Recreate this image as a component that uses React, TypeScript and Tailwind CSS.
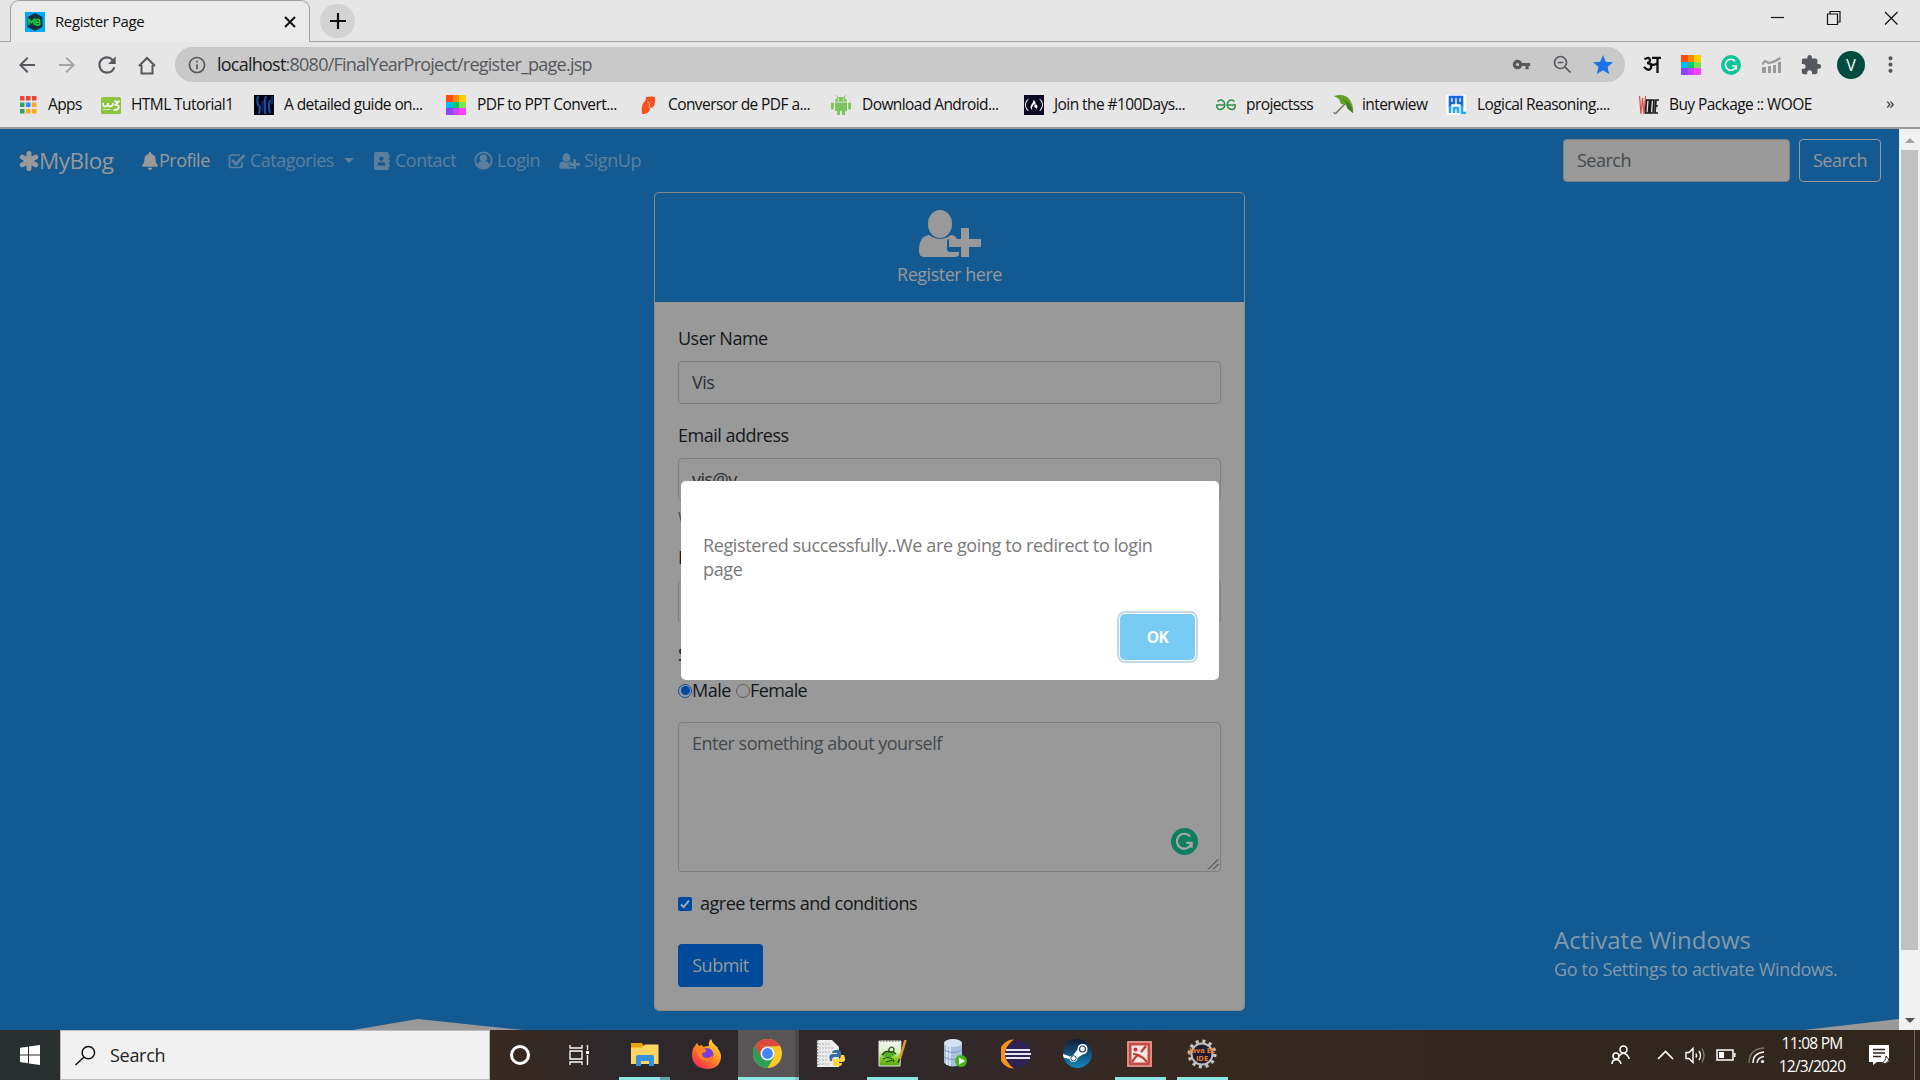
import React from "react";
import { FaBell, FaUserPlus, FaAddressBook, FaFreeCodeCamp } from "react-icons/fa";
import { MdVpnKey, MdExtension, MdStar, MdMoreVert, MdArrowBack, MdArrowForward, MdRefresh, MdInfoOutline } from "react-icons/md";

function MbIcon() {
  return (
    <svg width="20" height="20" viewBox="0 0 20 20">
      <rect width="20" height="20" fill="#03a9f4" />
      <path d="M10 1 17.5 5v10L10 19 2.5 15V5z" fill="#123044" />
      <path d="M4 13V7.500l2.500 3 2.500-3V13M11 7.500v5.500h3.200q1.600-1.500 0-2.800 1.200-1.500-.2-2.700zM11 10.200h3" fill="none" stroke="#10d63a" strokeWidth="1.500" />
    </svg>
  );
}

function ColorGrid({ size = 20 }: { size?: number }) {
  const c = ["#ff4b10", "#ff8c00", "#ffd000", "#00b8ff", "#00cc66", "#7fe050", "#8a45ff", "#cc40ff", "#ff40ff"];
  return (
    <svg width={size} height={size} viewBox="0 0 3 3" shapeRendering="crispEdges">
      {c.map((f, i) => <rect key={f} x={i % 3} y={Math.floor(i / 3)} width="1" height="1" fill={f} />)}
    </svg>
  );
}

function Grammarly({ size, bg, fg }: { size: number; bg: string; fg: string }) {
  return (
    <svg width={size} height={size} viewBox="0 0 24 24">
      <circle cx="12" cy="12" r="12" fill={bg} />
      <path d="M17 7.600A6.600 6.600 0 1 0 18.300 13.200H13.500M18.300 13v4.500" fill="none" stroke={fg} strokeWidth="1.900" />
    </svg>
  );
}

const appColors = ["#ea4335", "#ea4335", "#ea4335", "#34a060", "#2f8af5", "#fbaa19", "#34a060", "#fbaa19", "#fbaa19"];

const bookmarks: { w: string; label: string; icon: React.ReactNode; gap: string }[] = [
  { w: "w-[81px]", gap: "w-7", label: "Apps", icon: <svg width="17" height="18" viewBox="0 0 17 18">{appColors.map((f, i) => <rect key={i} x={(i % 3) * 6} y={Math.floor(i / 3) * 6.500} width="4.500" height="4.500" fill={f} />)}</svg> },
  { w: "w-[153px]", gap: "w-[30px]", label: "HTML Tutorial1", icon: <svg width="20" height="17" viewBox="0 0 20 17"><rect width="20" height="17" rx="1.500" fill="#8bc53f" /><path d="M2 6q0 4 2.500 3.500T7 6q0 4 2.500 3.500T12 6M13 4.500h4.500l-3 3.500q4 0 3 3-1.500 3-5 1.500" fill="none" stroke="#fff" strokeWidth="1.700" /><path d="M2 12.500h8" stroke="#d5ebb8" strokeWidth="1" /></svg> },
  { w: "w-[192px]", gap: "w-[30px]", label: "A detailed guide on...", icon: <svg width="20" height="20" viewBox="0 0 20 20"><rect width="20" height="20" fill="#02030a" /><path d="M4 1q-2 9 2 11L5 19M12 1q-2 5-1 9v9M16 5q-2 6 0 13" stroke="#164ca8" strokeWidth="2.200" fill="none" /><path d="M8.500 6v10M18 1v8" stroke="#0b2863" strokeWidth="2" /></svg> },
  { w: "w-[192px]", gap: "w-[31px]", label: "PDF to PPT Convert...", icon: <ColorGrid /> },
  { w: "w-[193px]", gap: "w-[30px]", label: "Conversor de PDF a...", icon: <svg width="20" height="20" viewBox="0 0 20 20"><path d="M8 2q6-1 9 0 1 10-4 11l-1 0q0 5-6 6H4Q3 10 6 7q2-1 2-5z" fill="#f4511e" /><path d="M9.500 7q3 0 1.500 6" stroke="#fbc0a8" fill="none" strokeWidth="1" /></svg> },
  { w: "w-[193px]", gap: "w-[31px]", label: "Download Android...", icon: <svg width="20" height="20" viewBox="0 0 20 20" fill="#7cc45c"><path d="M4 6.500Q4.500 2 10 2t6 4.500zM4 7.500h12V16H4z" /><path d="M0 8q1.400-1 2.800 0v6q-1.400 1-2.800 0zM17.200 8q1.400-1 2.800 0v6q-1.400 1-2.800 0zM6 15h3v5H6zM11 15h3v5h-3z" /><path d="m5.500.3 1.500 2.500M14.500.3 13 2.800" stroke="#7cc45c" /><circle cx="7.500" cy="4.500" r=".7" fill="#fff" /><circle cx="12.500" cy="4.500" r=".7" fill="#fff" /></svg> },
  { w: "w-[192px]", gap: "w-[30px]", label: "Join the #100Days...", icon: <span className="flex h-5 w-5 items-center justify-center bg-[#0a0a23]"><FaFreeCodeCamp size={18} color="#fff" /></span> },
  { w: "w-[117px]", gap: "w-[30px]", label: "projectsss", icon: <svg width="20" height="12" viewBox="0 0 20 12" fill="none" stroke="#2f8d46" strokeWidth="1.500"><path d="M1.500 2.500q2-2.300 5-1.200 3 1.800 2 6.200-1.500 3.500-5.500 2.800Q.500 9.500 .800 6h7.700M18.500 2.500q-2-2.300-5-1.200-3 1.800-2 6.200 1.500 3.500 5.500 2.800 2.500-.8 2.200-4.300h-7.700" /></svg> },
  { w: "w-[113px]", gap: "w-[29px]", label: "interwiew", icon: <svg width="21" height="20" viewBox="0 0 21 20"><path d="M1 1Q12-2 17 5q4 6 3 13l-5-4-2-4-5-1-2-5z" fill="#679f2b" /><path d="M8 3q6 3 6 10l6 5Q20 8 8 3z" fill="#457d22" /><path d="M12 9 4 17q-2 3-3 0" stroke="#7b7469" strokeWidth="1.500" fill="none" /></svg> },
  { w: "w-[193px]", gap: "w-[31px]", label: "Logical Reasoning....", icon: <svg width="20" height="20" viewBox="0 0 20 20" fill="none" strokeWidth="2.600"><rect width="20" height="20" fill="#fff" /><path d="M4 12V2h12v10M4 8h4V3M16 8h-4V3" stroke="#1668dc" /><path d="M4 11v7M8 18v-5h4v5M16 10v8h4" stroke="#2aa4f4" /></svg> },
  { w: "w-[200px]", gap: "w-[30px]", label: "Buy Package :: WOOE", icon: <svg width="20" height="20" viewBox="0 0 20 20" fill="none"><path d="m.500 1 1.500 18L3.500 3l1.500 16L6.500 1" stroke="#e34a4a" strokeWidth="1.200" /><path d="M7.500 5 6.500 18h3l1-13zM12 5l-1 13h3l1-13zM20 5h-3l-1 13h3M17 11h2" stroke="#1c1c1c" strokeWidth="1.700" /></svg> },
];

function Browser() {
  return (
    <header className="h-[129px] border-b-2 border-[#999] bg-[#e6e6e6] text-[#111]">
      <div className="flex h-[42px] border-b border-[#a0a0a0]">
        <div className="-mb-px ml-[10px] flex h-[42px] w-[300px] items-center rounded-t-[9px] border border-b-0 border-[#a0a0a0] bg-[#ebebeb] pl-[14px] pr-[13px]">
          <MbIcon />
          <span className="ml-[10px] flex-1 pb-px text-[15px] tracking-[-0.4px]">Register Page</span>
          <svg width="12" height="12" viewBox="0 0 12 12"><path d="m1 1 10 10M11 1 1 11" stroke="#111" strokeWidth="2" /></svg>
        </div>
        <div className="ml-[10px] mt-1 flex h-[34px] w-[35px] items-center justify-center rounded-full bg-[#d3d3d3]">
          <svg width="16" height="16" viewBox="0 0 16 16"><path d="M8 0v16M0 8h16" stroke="#111" strokeWidth="2.200" /></svg>
        </div>
        <div className="ml-auto mr-[22px] flex h-9 items-center">
          <svg width="127" height="16" viewBox="0 0 127 16" fill="none" stroke="#111" strokeWidth="1.200"><path d="M0 7.500h13" /><path d="M56.500 4h10v10.500h-10zM59 4V1.500h10V12h-2.500" /><path d="m114 2 12.500 12.500M126.500 2 114 14.500" /></svg>
        </div>
      </div>
      <div className="flex h-[45px] items-center pl-[15px] text-[#55585c]">
        <MdArrowBack size={24} />
        <MdArrowForward size={24} className="ml-[16px] text-[#a5a5a5]" />
        <MdRefresh size={26} className="ml-[15px]" />
        <svg className="ml-[17px]" width="20" height="20" viewBox="0 0 20 20" fill="none" stroke="currentColor" strokeWidth="2"><path d="M2 11 10 3l8 8M4.500 10v8.500h11V10" /></svg>
        <div className="ml-[18px] flex h-[35px] w-[1450px] items-center rounded-full bg-[#c9c9c9] pl-[12px] pr-[10px]">
          <MdInfoOutline size={20} />
          <span className="ml-[10px] whitespace-nowrap text-[18px] tracking-[-0.76px]"><span className="text-[#1c1c1c]">localhost</span>:8080/FinalYearProject/register_page.jsp</span>
          <MdVpnKey size={19} className="ml-auto" />
          <svg className="ml-[22px]" width="19" height="19" viewBox="0 0 19 19" fill="none" stroke="currentColor" strokeWidth="1.700"><circle cx="7.500" cy="7.500" r="6" /><path d="m12 12 5.500 5.500M4.700 7.500h5.600" /></svg>
          <MdStar size={24} className="ml-[19px] text-[#1a73e8]" />
        </div>
        <svg className="ml-[18px]" width="18" height="18" viewBox="0 0 18 18" fill="none" stroke="#111" strokeWidth="2.300"><path d="M9 1.800h9M14.500 1.500V17M1.500 3.300q5-3 5.500.7 0 3-3 3 5 0 4 5-2 4-7-1M7.500 8q4 2 7-1" /></svg>
        <span className="ml-[20px]"><ColorGrid size={20} /></span>
        <span className="ml-[20px]"><Grammarly size={20} bg="#15c39a" fg="#f2f2f2" /></span>
        <svg className="ml-[21px]" width="19" height="16" viewBox="0 0 19 16"><path d="M0 10h4v6H0zM6 9h3v7H6zM11 8h3v8h-3zM16 5h3v11h-3z" fill="#999" /><path d="M0 7.500 3 4l4 2Q13 5 18.500 1" stroke="#999" strokeWidth="2.200" fill="none" /></svg>
        <MdExtension size={22} className="ml-[19px]" />
        <span className="ml-[15px] flex h-7 w-7 items-center justify-center rounded-full bg-[#004d40] text-[16px] text-white">V</span>
        <MdMoreVert size={25} className="ml-[13px]" />
      </div>
      <div className="flex h-[36px] items-center pl-5 text-[15.500px] tracking-[-0.58px]">
        {bookmarks.map((b) => (
          <div key={b.label} className={"flex h-6 items-center whitespace-nowrap " + b.w}>
            <span className={"flex shrink-0 " + b.gap}>{b.icon}</span>
            <span className="pb-px">{b.label}</span>
          </div>
        ))}
        <span className="ml-[47px] pb-1 text-[17px] text-[#333]">»</span>
      </div>
    </header>
  );
}

function Navbar() {
  return (
    <nav className="flex h-[63px] items-center pl-[19px] text-[18px] text-[#5b7f9c]">
      <span className="flex w-[122px] items-center text-[22.5px] tracking-[-0.5px] text-[#999]">
        <svg width="20" height="20" viewBox="0 0 20 20" stroke="#999" strokeWidth="5" strokeLinecap="round"><path d="M10 2.500v15M3.300 6.200l13.400 7.600M16.700 6.200 3.300 13.800" /></svg>
        MyBlog
      </span>
      <span className="flex w-[87px] items-center tracking-[-0.5px] text-[#999]"><FaBell size={18} />Profile</span>
      <span className="flex w-[145px] items-center gap-1 tracking-[-0.5px]">
        <svg width="18" height="18" viewBox="0 0 18 18" fill="none" stroke="currentColor"><path d="M14 10v3.500q0 2-2 2H3.500q-2 0-2-2V5q0-2 2-2h8.500" strokeWidth="1.700" /><path d="m4 8 4 4 8.500-9" strokeWidth="2.700" /></svg>
        Catagories<span className="ml-[6px] border-x-[5.500px] border-t-[5.500px] border-x-transparent border-t-[#5b7f9c]" />
      </span>
      <span className="flex w-[101px] items-center gap-[4px] tracking-[-0.5px]"><FaAddressBook size={18} />Contact</span>
      <span className="flex w-[85px] items-center gap-1 tracking-[-0.5px]">
        <svg width="19" height="19" viewBox="0 0 20 20"><circle cx="10" cy="10" r="8.600" fill="none" stroke="currentColor" strokeWidth="1.800" /><circle cx="10" cy="7.600" r="3.900" fill="currentColor" /><path d="M3 15q2-4.500 4-4 2.500 1.300 6 0 2-.5 4 4-7 7-14 0z" fill="currentColor" /></svg>
        Login
      </span>
      <span className="flex items-center gap-1 tracking-[-0.35px]">
        <svg width="21" height="18" viewBox="0 0 63 48" fill="currentColor"><ellipse cx="22" cy="14" rx="12" ry="13" /><path d="M11 25q11 8 22 0 4 0 6 4H31q-2 0-2 3v7q0 3 3 3h9v2q0 3-4 3H6q-5 0-5-6Q1 27 11 25z" /><path d="M43 19h8v11h12v8H51v10h-8V38H31v-8h12z" /></svg>
        SignUp
      </span>
      <div className="ml-auto flex gap-[9px] pr-[18px] leading-[41px] tracking-[-0.5px]">
        <div className="h-[43px] w-[227px] rounded-[4px] border border-[#7d8286] bg-[#999] pl-[13px] text-[#44494d]">Search</div>
        <div className="h-[43px] w-[82px] rounded-[4px] border border-[#959799] text-center text-[#959799]">Search</div>
      </div>
    </nav>
  );
}

function Field({ value }: { value?: string }) {
  return <div className="mt-[7px] h-[43px] rounded-[4px] border border-[#7c7e82] pl-[13px] leading-[41px] text-[#2c3034]">{value}</div>;
}

function RegisterCard() {
  return (
    <section className="ml-[654px] h-[819px] w-[591px] rounded-[5px] border border-[#8b8781] bg-[#999] text-[18px] leading-[27px] tracking-[-0.5px] text-[#14171a]">
      <div className="flex h-[109px] flex-col items-center rounded-t-[4px] border-b border-[#1b4f78] bg-[#145a92] pt-[16px] text-[#999]">
        <svg width="64" height="49" viewBox="0 0 64 49" fill="#999">
          <ellipse cx="22" cy="15" rx="12" ry="14" />
          <path d="M11 26q11 8 22 0 4 0 6 4H31q-2 0-2 3v7q0 3 3 3h9v2q0 3-4 3H6q-5 0-5-6Q1 27 11 26z" />
          <path d="M43 19h8v11h12v8H51v10h-8V38H31v-8h12z" />
        </svg>
        <span className="mt-[3px]">Register here</span>
      </div>
      <div className="flex flex-col px-[23px] pt-[23px]">
        <label>User Name</label>
        <div className="flex flex-col pt-[2px]"><Field value="Vis" /></div>
        <label className="mt-[18px]">Email address</label>
        <div className="flex flex-col pt-[2px]"><Field value="vis@v" /></div>
        <small className="mt-[5px] h-[22px] text-[14.400px] leading-[22px] text-[#41464b]">We'll never share your email with anyone else.</small>
        <label className="mt-[16px]">Password</label>
        <div className="flex flex-col pt-[2px]"><Field /></div>
        <span className="mt-[18px]">Select Gender</span>
        <div className="mt-[9px] flex h-[27px] items-center">
          <span className="flex h-[14px] w-[14px] items-center justify-center rounded-full border border-[#0a4fa5]"><span className="h-[9px] w-[9px] rounded-full bg-[#0049a3]" /></span>
          <span className="w-[44px]">Male</span>
          <span className="h-[14px] w-[14px] rounded-full border border-[#5e5e5e]" />
          <span className="tracking-[-0.6px]">Female</span>
        </div>
        <div className="relative mt-[18px] h-[150px] rounded-[4px] border border-[#7c7e82] pl-[13px] pt-[7px] text-[#44494d]">
          Enter something about yourself
          <span className="absolute bottom-[16px] right-[22px]"><Grammarly size={27} bg="#0d7e60" fg="#a5aaa7" /></span>
          <svg className="absolute bottom-[1px] right-[1px]" width="12" height="12" viewBox="0 0 12 12"><path d="m1 11.500 10.500-10.500M6 11.500 11.500 6" stroke="#333" strokeWidth="1" /></svg>
        </div>
        <div className="mt-[18px] flex h-[27px] items-center">
          <span className="flex h-[14px] w-[14px] items-center justify-center rounded-[2px] bg-[#0049a3]"><svg width="10" height="10" viewBox="0 0 10 10"><path d="m1 5.500 2.700 2.500L9 1.500" fill="none" stroke="#a8afb8" strokeWidth="1.900" /></svg></span>
          <span className="ml-2">agree terms and conditions</span>
        </div>
        <div className="mt-[27px] h-[43px] w-[85px] rounded-[4px] bg-[#004a99] text-center leading-[43px] text-[#999]">Submit</div>
      </div>
    </section>
  );
}

function Modal() {
  return (
    <div className="absolute left-[681px] top-[481px] z-10 flex h-[199px] w-[538px] flex-col rounded-[5px] bg-white pl-[22px] pt-[52px]">
      <p className="w-[470px] text-[18px] leading-6 tracking-[-0.38px] text-[#797979]">Registered successfully..We are going to redirect to login page</p>
      <div className="ml-auto mr-[21px] mt-[30px] flex h-[52px] w-[81px] items-center justify-center rounded-[8px] border-2 border-[#c3d8ea] bg-white p-px">
        <span className="flex h-full w-full items-center justify-center rounded-[5px] bg-[#78cbf2] pt-[2px] text-[15.500px] font-bold tracking-[-0.6px] text-white">OK</span>
      </div>
    </div>
  );
}

function Scrollbar() {
  return (
    <div className="flex w-[21px] flex-col items-center bg-[#f1f1f1]">
      <span className="mt-[9px] border-x-[5px] border-b-[5px] border-x-transparent border-b-[#a3a3a3]" />
      <span className="mt-[7px] h-[800px] w-[17px] bg-[#c1c1c1]" />
      <span className="mb-[7px] mt-auto border-x-[5px] border-t-[5px] border-x-transparent border-t-[#505050]" />
    </div>
  );
}

function Explorer() {
  return <svg width="28" height="24" viewBox="0 0 28 24"><path d="M0 1h11l2 3h14v18H0z" fill="#e8a20c" /><path d="M0 5.500h11l3-3h13.500V22H0z" fill="#ffd561" /><path d="M5 24V15q0-2 2-2h14q2 0 2 2v9h-5v-5h-8v5z" fill="#3391dd" /></svg>;
}
function Firefox() {
  return (
    <svg width="29" height="30" viewBox="0 0 29 30">
      <defs>
        <linearGradient id="ff" x1="1" y1="0" x2=".2" y2="1"><stop offset="0" stopColor="#fff04a" /><stop offset=".45" stopColor="#ff9a1f" /><stop offset="1" stopColor="#f5234f" /></linearGradient>
      </defs>
      <path d="M2 8 5 4l2 3 3-1 1 2q3-1 6-1Q16 3 19 0q1 4 5 7 2 1 2 3 3 3 3 8-1 12-14 12Q1 29 0 17 0 10 2 8z" fill="url(#ff)" />
      <circle cx="15" cy="15.500" r="6.500" fill="#7a3bd8" />
      <path d="M4 8q5 1 9 2 2 1 1 3l-4 1q0 5 5 5 4 0 6-3-1 7-8 6-8-2-9-14z" fill="#ff8420" />
    </svg>
  );
}
function Chrome() {
  return (
    <svg width="29" height="29" viewBox="0 0 48 48">
      <circle cx="24" cy="24" r="24" fill="#fbc828" />
      <path d="M3.200 12A24 24 0 0 1 44.800 12z" fill="#d94a3d" />
      <path d="M44.800 12H24l10 6 4 1 9-1z" fill="#fbc828" />
      <path d="M3.200 12A24 24 0 0 0 24 48L34.400 30 24 24 13 13 3.200 12z" fill="#2d9e57" />
      <path d="m3.200 12 10.400 18L24 13l20.800-1H6z" fill="#d94a3d" />
      <circle cx="24" cy="24" r="11.500" fill="#f4f4f4" />
      <circle cx="24" cy="24" r="9" fill="#4285f4" />
    </svg>
  );
}
function PythonFile() {
  return (
    <svg width="30" height="30" viewBox="0 0 30 30">
      <path d="M1 1h15l7 7v20H1z" fill="#ececec" />
      <path d="M3 5h12M3 9h14M3 13h12M3 17h9M3 21h9M3 25h10" stroke="#c4c4c4" strokeWidth="1.500" strokeDasharray="2 1" />
      <path d="M1.500 1v27" stroke="#777" strokeWidth="1.600" strokeDasharray="1.500 1.500" />
      <path d="M20 11q5-1 5 3v4h-6q-3 0-3 4h-2q-2-7 2-7h5v-1h-5q0-3 4-3z" fill="#376f9f" />
      <path d="M25 16h3q3 7-2 7h-5v1h5q0 4-5 3-5 0-4-3v-4h5q3 0 3-4z" fill="#ffd042" />
    </svg>
  );
}
function NotepadPP() {
  return (
    <svg width="29" height="31" viewBox="0 0 29 31">
      <defs><linearGradient id="np" x2="0" y2="1"><stop stopColor="#f2f5f0" /><stop offset=".45" stopColor="#d8efc0" /><stop offset=".7" stopColor="#7ed01c" /><stop offset="1" stopColor="#58a812" /></linearGradient></defs>
      <path d="M1 3h22l-1 25H1z" fill="url(#np)" stroke="#e8e8e8" />
      <path d="M2 3h20" stroke="#777" strokeWidth="1.500" strokeDasharray="1.500 1.500" />
      <path d="M4 17q3-5 8-3 4-1 6 2-5 5-10 3-3 0-4-2z" fill="#58ae28" />
      <path d="M4 17q3-5 8-3 4-1 6 2M11 11q3-4 5 0 0 4-3 3-3-1-2-3M5 21q5-3 9 0M8 24l7-2 1 2" stroke="#1c3d10" strokeWidth="1.200" fill="none" />
      <path d="m27.500 2-6 20" stroke="#d99a26" strokeWidth="2.600" />
      <path d="m21.500 21-1.500 4" stroke="#333" strokeWidth="1.500" />
    </svg>
  );
}
function Database() {
  return (
    <svg width="25" height="31" viewBox="0 0 25 31">
      <path d="M1 5v20q9 7 18 0V5z" fill="#a7bfdd" /><path d="M4 7v20M7 8v20" stroke="#d3e1f2" strokeWidth="2" /><ellipse cx="10" cy="5" rx="9" ry="4" fill="#d6e3f2" /><path d="M1 12q9 5 18 0M1 19q9 5 18 0" stroke="#7e9bc1" fill="none" />
      <circle cx="18" cy="23" r="6" fill="#43b51d" /><path d="m16 19.500 6 3.500-6 3.500z" fill="#fff" />
    </svg>
  );
}
function Eclipse() {
  return <svg width="30" height="30" viewBox="0 0 30 30"><path d="M13 .5A14.500 14.500 0 0 0 13 29.500 17 17 0 0 1 13 .5z" fill="#f7941e" /><circle cx="17" cy="15" r="13" fill="#2c2255" /><path d="M5 11h24M4 15h26M5 19h24" stroke="#e8e6f0" strokeWidth="2" /></svg>;
}
function Steam() {
  return (
    <svg width="29" height="29" viewBox="0 0 29 29">
      <defs>
        <linearGradient id="st" x2="0" y2="1"><stop stopColor="#111a38" /><stop offset="1" stopColor="#1587bd" /></linearGradient>
        <clipPath id="sc"><circle cx="14.500" cy="14.500" r="14.500" /></clipPath>
      </defs>
      <g clipPath="url(#sc)">
        <rect width="29" height="29" fill="url(#st)" />
        <path d="m-1 14.500 8 3 3-1 4.500-6q0-5.500 5-5.500t5 5-5 5.500l-5 3.500q-.5 4-4 4t-4-3l-8-2z" fill="#fff" />
        <circle cx="19.500" cy="10" r="3" fill="#fff" stroke="#183b60" strokeWidth="1.200" />
        <circle cx="10.500" cy="19.300" r="2.600" fill="none" stroke="#1c527b" strokeWidth="1" />
      </g>
    </svg>
  );
}
function RedFrame() {
  return (
    <svg width="25" height="26" viewBox="0 0 25 26">
      <path d="M0 0h25v26H0z" fill="#c24a42" />
      <path d="M1 1h23v24H1z" fill="none" stroke="#e5a09a" strokeWidth="1.500" />
      <path d="M4.500 4.500h16v17h-16z" fill="#f7e7e4" />
      <path d="M5 21q4-6 6-7-3-1-5-1M11 14q5 2 9 7M19 5l-5 6" stroke="#c2362e" strokeWidth="2.200" fill="none" />
      <circle cx="8.500" cy="8.500" r="2" fill="#cf3038" />
    </svg>
  );
}
function JavaEE() {
  return (
    <svg width="30" height="30" viewBox="0 0 30 30">
      <circle cx="15" cy="15" r="12.700" fill="none" stroke="#c4c4c4" strokeWidth="3.600" strokeDasharray="3 3.650" />
      <circle cx="15" cy="15" r="10.500" fill="#211a30" stroke="#bdbdbd" strokeWidth="2" />
      <text x="15" y="14" textAnchor="middle" fontSize="7.500" fontWeight="700" fill="#e3822c">Java EE</text>
      <text x="15" y="21.500" textAnchor="middle" fontSize="7.500" fontWeight="700" fill="#e3822c">IDE</text>
    </svg>
  );
}

const tasks: { w: string; box: string; icon: React.ReactNode; bar?: string; tail?: string }[] = [
  { w: "w-[62px]", box: "w-[51px] justify-center", icon: <Explorer />, bar: "w-[41px]", tail: "w-[10px] bg-[#5fa3a5]" },
  { w: "w-[57px]", box: "w-[51px] justify-center", icon: <Firefox /> },
  { w: "w-[67px]", box: "w-[61px] border-r-4 border-[#4b4748] bg-[#595456] pl-[15px]", icon: <Chrome />, bar: "w-[57px]", tail: "w-[4px] bg-[#7cc5c8]" },
  { w: "w-[62px]", box: "w-[51px] justify-center", icon: <PythonFile /> },
  { w: "w-[62px]", box: "w-[51px] justify-center", icon: <NotepadPP />, bar: "w-[51px]" },
  { w: "w-[62px]", box: "w-[51px] justify-center pl-[2px]", icon: <Database /> },
  { w: "w-[62px]", box: "w-[51px] justify-center pr-[2px]", icon: <Eclipse /> },
  { w: "w-[62px]", box: "w-[51px] justify-center pr-[2px]", icon: <Steam /> },
  { w: "w-[62px]", box: "w-[51px] justify-center pr-[2px]", icon: <RedFrame />, bar: "w-[51px]" },
  { w: "w-[62px]", box: "w-[51px] justify-center pr-[2px]", icon: <JavaEE />, bar: "w-[51px]" },
];

function Taskbar() {
  return (
    <footer className="flex h-[50px] bg-[linear-gradient(90deg,#28302f_0px,#28302f_60px,#38291f_490px,#2d282b_620px,#30282b_900px,#38291f_1220px,#32271d_1500px,#32271d_1920px)] text-white">
      <div className="flex w-[60px] items-center justify-center">
        <svg width="20" height="20" viewBox="0 0 20 20" fill="#fff"><path d="M0 2.800 8 1.700v7.700H0zM9 1.500 20 0v9.400H9zM0 10.400h8v7.800L0 17.100zM9 10.400h11V20L9 18.400z" /></svg>
      </div>
      <div className="flex w-[430px] items-center border border-[#bcbcbc] bg-[#f1f1f1] pl-[14px] text-[18px] tracking-[-0.3px] text-[#222]">
        <svg width="21" height="21" viewBox="0 0 22 21" fill="none" stroke="#111" strokeWidth="1.600"><circle cx="14" cy="7.500" r="6.500" /><path d="m9.500 12-9 8.500" /></svg>
        <span className="ml-[14px]">Search</span>
      </div>
      <div className="flex w-[129px] items-center pl-[20px]">
        <span className="h-5 w-5 rounded-full border-[3px] border-white" />
        <svg className="ml-[39px]" width="21" height="20" viewBox="0 0 21 20" fill="none" stroke="#fff" strokeWidth="1.300"><path d="M1 0v3h12V0M1 6h12v8H1zM1 20v-3h12v3M18.500 0v5M18.500 10v10" /><path d="M17 6h3v3h-3z" fill="#fff" stroke="none" /></svg>
      </div>
      {tasks.map((t, i) => (
        <div key={i} className={"flex flex-col " + t.w}>
          <div className={"flex h-[47px] items-center " + t.box}>{t.icon}</div>
          {t.bar && (
            <div className="flex h-[3px]">
              <span className={"bg-[#8ce6e6] " + t.bar} />
              {t.tail && <span className={t.tail} />}
            </div>
          )}
        </div>
      ))}
      <div className="ml-auto flex w-[309px] items-center">
        <svg width="19" height="20" viewBox="0 0 19 20" fill="none" stroke="#fff" strokeWidth="1.600"><circle cx="12.500" cy="4.500" r="3.500" /><circle cx="5" cy="11" r="3" /><path d="M8 11q4-5 8-1 2 2 2 4M1 19q0-4 4-4.500 4 0 5 4.500" /></svg>
        <svg className="ml-[27px]" width="17" height="10" viewBox="0 0 17 10" fill="none" stroke="#fff" strokeWidth="1.600"><path d="m1 9 7.500-7.500L16 9" /></svg>
        <svg className="ml-[11px]" width="21" height="19" viewBox="0 0 21 19" fill="none" stroke="#fff" strokeWidth="1.400"><path d="M1 6.500h3l4-4v14l-4-4H1zM11 7.500q1 2 0 4M14 5q3 4.500 0 9" /><path d="M17 2.500q4 7 0 14" stroke="#82786f" /></svg>
        <svg className="ml-[10px]" width="20" height="12" viewBox="0 0 20 12"><path d="M1 1h16v10H1z" fill="none" stroke="#fff" strokeWidth="1.500" /><path d="M3 3h5v6H3zM18 4h1.500v4H18z" fill="#fff" /></svg>
        <svg className="ml-[12px]" width="17" height="17" viewBox="0 0 17 17" fill="none" stroke="#fff" strokeWidth="1.400"><path d="M1 16Q1 2 16 1" stroke="#7d7369" /><path d="M5 16Q5 6 16 5M9 16Q10 10 16 9.500" /><circle cx="14.500" cy="14.500" r="1.600" fill="#fff" stroke="none" /></svg>
        <div className="ml-[11px] w-[72px] whitespace-nowrap pb-px text-center text-[15.500px] leading-[23px] tracking-[-0.75px]">11:08 PM<br />12/3/2020</div>
        <svg className="ml-[21px]" width="22" height="21" viewBox="0 0 22 21"><path d="M0 0h20v17H8l-4 3v-3H0z" fill="#fff" /><path d="M4 4.500h12M4 8h12M4 11.500h8" stroke="#32271d" strokeWidth="1.300" /><path d="M17 11q4 3 2 6-3 3-7 1 5-1 5-7z" fill="#fff" stroke="#32271d" /></svg>
        <span className="ml-auto mr-[5px] h-[50px] w-px bg-[#77706a]" />
      </div>
    </footer>
  );
}

export default function App() {
  return (
    <div className="relative flex h-[1080px] w-[1920px] flex-col overflow-hidden [font-family:'Open_Sans','Noto_Sans',sans-serif]">
      <Browser />
      <div className="flex h-[901px]">
        <main className="relative w-[1899px] bg-[#145a92]">
          <Navbar />
          <RegisterCard />
          <svg className="absolute bottom-0 left-0" width="1899" height="11" viewBox="0 0 1899 11" fill="#999"><path d="m353 11 65-11 105 11zM1804 11l95-11v11z" /></svg>
          <div className="absolute left-[1554px] top-[794px] whitespace-nowrap text-[#8099ab]">
            <p className="text-[24px] leading-[34px] tracking-[0px]">Activate Windows</p>
            <p className="text-[18px] leading-[24px] tracking-[-0.33px]">Go to Settings to activate Windows.</p>
          </div>
        </main>
        <Scrollbar />
      </div>
      <Taskbar />
      <Modal />
    </div>
  );
}
